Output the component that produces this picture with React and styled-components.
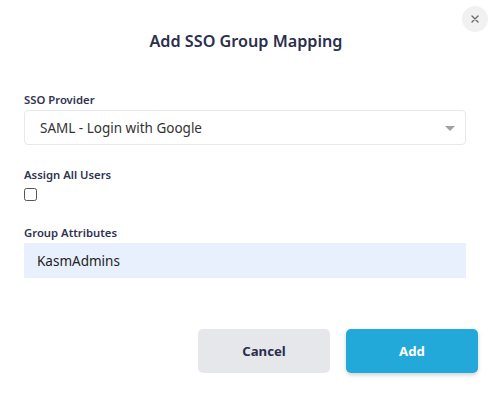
import React from 'react';
import styled, { createGlobalStyle } from 'styled-components';

const GlobalStyle = createGlobalStyle`
  html, body {
    margin: 0;
    padding: 0;
    background: #ffffff;
  }
  body {
    font-family: "Noto Sans", "Open Sans", "Liberation Sans", sans-serif;
  }
`;

const Modal = styled.div`
  width: 493px;
  height: 398px;
  box-sizing: border-box;
  padding: 26px 27px 0 24px;
  display: flex;
  flex-direction: column;
  background: #fff;
`;

const Header = styled.div`
  display: flex;
  justify-content: center;
  align-items: center;
  height: 30px;
`;

const Title = styled.h2`
  margin: 0;
  font-size: 16.2px;
  font-weight: 600;
  color: #2b2f4b;
  padding-left: 2px;
`;

const CloseButton = styled.button`
  position: absolute;
  top: 6px;
  right: 5px;
  width: 26px;
  height: 26px;
  border-radius: 50%;
  border: none;
  background: #f1f1f2;
  color: #777;
  display: flex;
  align-items: center;
  justify-content: center;
  padding: 0;
  cursor: pointer;
`;

const Form = styled.div`
  display: flex;
  flex-direction: column;
  margin-top: 37px;
  width: 442px;
`;

const Field = styled.div`
  display: flex;
  flex-direction: column;
  margin-bottom: ${(p) => p.$gap || '21px'};
`;

const Label = styled.label`
  font-size: 11.3px;
  font-weight: 600;
  color: #30344f;
  line-height: 14px;
  margin-bottom: 3px;
`;

const SelectBox = styled.div`
  height: 35px;
  box-sizing: border-box;
  border: 1px solid #e6e8ec;
  border-radius: 4px;
  display: flex;
  align-items: center;
  justify-content: space-between;
  padding: 0 10px 0 15px;
  font-size: 13.5px;
  color: #333;
`;

const Caret = styled.span`
  width: 0;
  height: 0;
  border-left: 5px solid transparent;
  border-right: 5px solid transparent;
  border-top: 5px solid #9ea1a8;
  margin-top: 2px;
`;

const Checkbox = styled.span`
  width: 11px;
  height: 11px;
  border: 1px solid #555;
  border-radius: 2.5px;
  margin-top: 3px;
  background: #fff;
`;

const TextInput = styled.div`
  height: 35px;
  box-sizing: border-box;
  background: #e8f0fe;
  display: flex;
  align-items: center;
  padding: 0 13px;
  font-size: 13.5px;
  color: #222;
`;

const Footer = styled.div`
  display: flex;
  justify-content: flex-end;
  gap: 16px;
  margin-top: 30px;
  margin-right: -12px;
`;

const Button = styled.button`
  width: 132px;
  height: 44px;
  border: none;
  border-radius: 5px;
  font-family: inherit;
  font-size: 13.2px;
  font-weight: 700;
  cursor: pointer;
  background: ${(p) => (p.$primary ? '#22a8d9' : '#e6e7eb')};
  color: ${(p) => (p.$primary ? '#ffffff' : '#2b2f4b')};
  box-shadow: ${(p) => (p.$primary ? '0 2px 4px rgba(0,0,0,0.18)' : 'none')};
`;

export default function App() {
  return (
    <>
      <GlobalStyle />
      <Modal>
        <Header>
          <Title>Add SSO Group Mapping</Title>
        </Header>
        <CloseButton aria-label="Close">
          <svg width="8" height="8" viewBox="0 0 8 8">
            <path d="M1 1 L7 7 M7 1 L1 7" stroke="#6b6b6b" strokeWidth="1.4" strokeLinecap="round" />
          </svg>
        </CloseButton>
        <Form>
          <Field $gap="23px">
            <Label>SSO Provider</Label>
            <SelectBox>
              <span>SAML - Login with Google</span>
              <Caret />
            </SelectBox>
          </Field>
          <Field $gap="25px">
            <Label>Assign All Users</Label>
            <Checkbox />
          </Field>
          <Field>
            <Label>Group Attributes</Label>
            <TextInput>KasmAdmins</TextInput>
          </Field>
        </Form>
        <Footer>
          <Button>Cancel</Button>
          <Button $primary>Add</Button>
        </Footer>
      </Modal>
    </>
  );
}
